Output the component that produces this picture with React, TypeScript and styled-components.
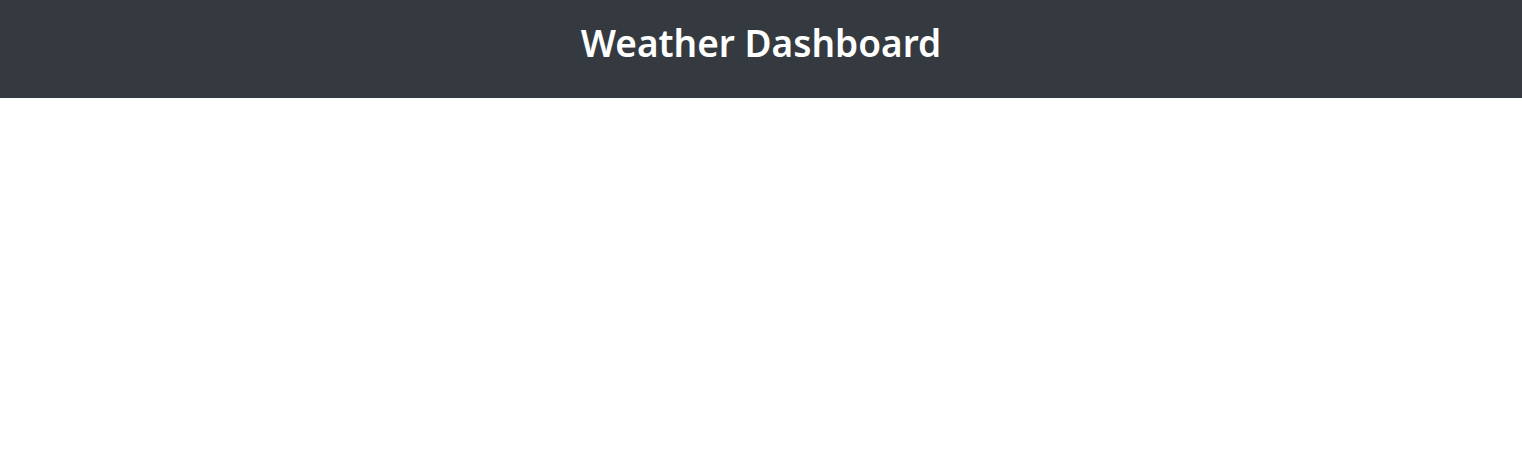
import React from 'react'
import styled, { createGlobalStyle } from 'styled-components'

const GlobalStyle = createGlobalStyle`
  body {
    margin: 0;
    background: #fff;
    font-family: 'Noto Sans', 'Open Sans', sans-serif;
  }
`

const Header = styled.header`
  background: #343a40;
  height: 98px;
  box-sizing: border-box;
  padding-bottom: 11px;
  display: flex;
  align-items: center;
  justify-content: center;
`

const Title = styled.h1`
  margin: 0;
  color: #fff;
  font-size: 37px;
  font-weight: 600;
  letter-spacing: 0;
  line-height: 1.2;
`

export default function App() {
  return (
    <>
      <GlobalStyle />
      <Header>
        <Title>Weather Dashboard</Title>
      </Header>
    </>
  )
}
